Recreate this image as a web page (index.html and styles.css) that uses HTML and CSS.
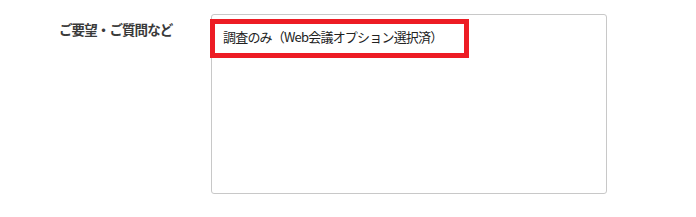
FILE: index.html
```html
<!DOCTYPE html>
<html lang="ja">
<head>
  <meta charset="UTF-8">
  <title>お問い合わせ</title>
  <link rel="stylesheet" href="styles.css">
</head>
<body>
  <div class="form-row">
    <label class="form-label" for="message">ご要望・ご質問など</label>
    <div class="form-field">
      <div class="textarea" id="message">調査のみ（Web会議オプション選択済）</div>
      <div class="highlight"></div>
    </div>
  </div>
</body>
</html>
```

FILE: styles.css
```css
body {
  margin: 0;
  padding: 0;
  background: #ffffff;
  font-family: "Noto Sans CJK JP", "Noto Sans", sans-serif;
  color: #333;
}
.form-row {
  display: flex;
  padding: 14px 0 0 59px;
}
.form-label {
  width: 152px;
  flex-shrink: 0;
  font-size: 13.5px;
  font-weight: bold;
  line-height: 20px;
  padding-top: 5px;
  letter-spacing: -0.9px;
  color: #3a3a3a;
}
.form-field {
  position: relative;
}
.textarea {
  box-sizing: border-box;
  width: 396px;
  height: 180px;
  border: 1px solid #c8c8c8;
  border-radius: 3px;
  padding: 12px 11px;
  font-size: 13px;
  line-height: 20px;
  letter-spacing: -0.8px;
  color: #222;
}
.highlight {
  position: absolute;
  left: -1px;
  top: 5px;
  width: 259px;
  height: 39px;
  box-sizing: border-box;
  border: 5px solid #ed1c24;
}
```
